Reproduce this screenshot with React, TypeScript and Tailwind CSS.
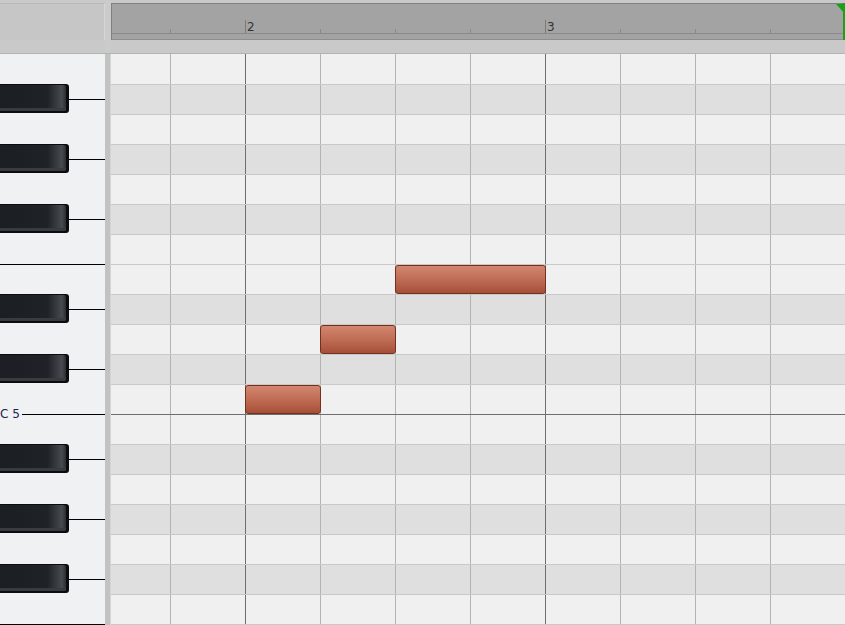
const ROWS = 20;
const BLACK = new Set([1, 3, 5, 8, 10, 13, 15, 17]);
const COLS = [1, 2, 3, 4, 5, 6, 7, 8, 9];
const BARS: Record<number, string> = { 2: "2", 6: "3" };

const notes = [
  { left: 134, top: 331, width: 76 },
  { left: 209, top: 271, width: 76 },
  { left: 284, top: 211, width: 151 },
];

const BlackKey = () => (
  <div className="flex h-[30px] shrink-0 items-start">
    <div className="h-[29px] w-[69px] shrink-0 rounded-r-[3px] bg-[#0b0c0e] pt-[1px] pr-[3px] pb-[2px]">
      <div className="h-full w-full rounded-r-[2px] bg-[linear-gradient(to_right,#1b1e23,#1f2227_72%,#474a4f_94%,#2a2c30)] shadow-[inset_0_-3px_0_#383b40]" />
    </div>
    <div className="flex-1 pt-[15px]">
      <div className="h-px bg-black" />
    </div>
  </div>
);

const Keyboard = () => (
  <div className="flex w-[105px] shrink-0 flex-col overflow-hidden bg-[#f0f1f3]">
    {Array.from({ length: ROWS }).map((_, i) => {
      if (BLACK.has(i)) return <BlackKey key={i} />;
      if (i === 12)
        return (
          <div key={i} className="h-[30px] shrink-0">
            <div className="-mt-[8px] flex h-[16px] items-center">
              <span className="w-[22px] text-[12px] leading-none text-[#1c2350]">C 5</span>
              <div className="h-px flex-1 bg-black" />
            </div>
          </div>
        );
      const edge = i === 7 || i === 19;
      return (
        <div
          key={i}
          className={`h-[30px] shrink-0 ${edge ? "border-t border-black" : ""}`}
        />
      );
    })}
  </div>
);

const Grid = () => (
  <div className="relative flex flex-1 flex-col overflow-hidden">
    {Array.from({ length: ROWS }).map((_, i) => (
      <div
        key={i}
        className={`flex h-[30px] shrink-0 ${BLACK.has(i) ? "bg-[#dfdfdf]" : "bg-[#f0f0f0]"} ${
          i === 0 ? "" : i === 12 ? "border-t border-[#6e6e6e]" : "border-t border-[#c9c9c9]"
        }`}
      >
        <div className="w-[59px] shrink-0" />
        {COLS.map((c) => (
          <div
            key={c}
            className={`w-[75px] shrink-0 border-l ${BARS[c] ? "border-[#6e6e6e]" : "border-[#b3b3b3]"}`}
          />
        ))}
      </div>
    ))}
    {notes.map((n, i) => (
      <div
        key={i}
        className="absolute h-[29px] rounded-[3px] border border-[#74301f] bg-[linear-gradient(to_bottom,#d3866f,#bd6a52_55%,#a64f38)]"
        style={{ left: n.left, top: n.top, width: n.width }}
      />
    ))}
  </div>
);

const Ruler = () => (
  <div className="relative flex h-[37px] flex-col border-t border-b border-l border-[#808080] border-b-[#8d8d8d] bg-[#a3a3a3]">
    <div className="flex h-[29px] shrink-0">
      <div className="w-[58px] shrink-0" />
      {COLS.map((c) => (
        <div key={c} className="relative w-[75px] shrink-0">
          {BARS[c] ? (
            <>
              <div className="absolute bottom-0 left-0 h-[13px] w-px bg-[#7a7a7a]" />
              <span className="absolute left-[2px] top-[17px] text-[12px] leading-none text-[#333]">
                {BARS[c]}
              </span>
            </>
          ) : (
            <div className="absolute bottom-0 left-0 h-[4px] w-px bg-[#8a8a8a]" />
          )}
        </div>
      ))}
    </div>
    <div className="h-px shrink-0 bg-[#8a8a8a]" />
    <div className="absolute -top-px right-0 h-[37px] w-[2px] bg-[#17a317]" />
    <svg className="absolute right-0 top-0" width="9" height="10" viewBox="0 0 9 10">
      <polygon points="0,0 9,0 9,10" fill="#17a317" />
    </svg>
  </div>
);

export default function App() {
  return (
    <div className="flex h-[625px] w-[845px] flex-col overflow-hidden bg-[#c9c9c9] font-['DejaVu_Sans',sans-serif]">
      <div className="flex h-[54px] shrink-0 border-b border-[#b3b3b3]">
        <div className="w-[105px] shrink-0 pt-[3px]">
          <div className="h-[37px] border-t border-r border-[#b8b8b8] border-r-[#d6d6d6] bg-[#c6c6c6]" />
        </div>
        <div className="w-[6px] shrink-0 bg-[#cbcbcb]" />
        <div className="flex-1 pt-[3px]">
          <Ruler />
        </div>
      </div>
      <div className="flex flex-1 overflow-hidden">
        <Keyboard />
        <div className="w-[6px] shrink-0 border-r border-[#d4d4d4] bg-[#c2c2c2]" />
        <Grid />
      </div>
    </div>
  );
}
